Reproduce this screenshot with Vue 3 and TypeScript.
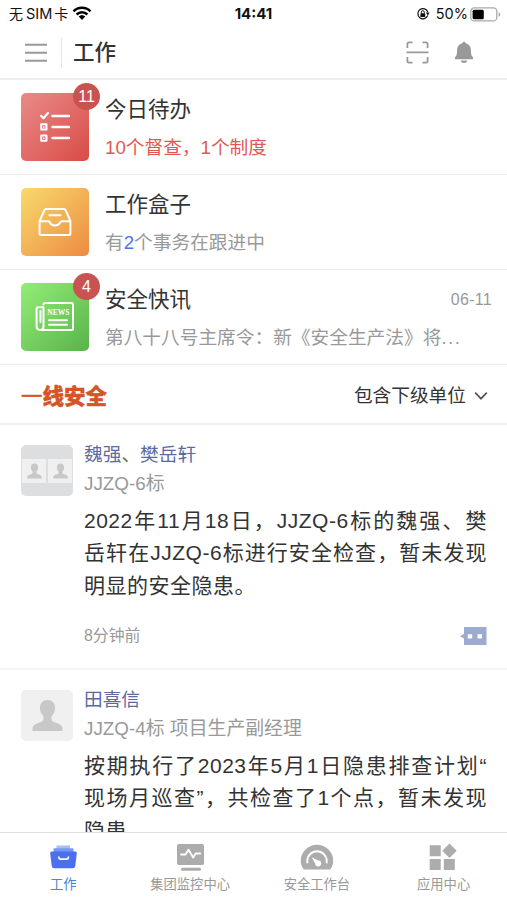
<script setup lang="ts">
interface Part { text: string; tone?: string }
interface Entry { kind: 'todo' | 'box' | 'news'; title: string; badge?: string; date?: string; parts: Part[] }
interface Line { text: string; fill: boolean }
interface Post { name: string[]; unit: string; group: boolean; time?: string; lines: Line[] }
interface Tab { label: string; icon: string }

const entries: Entry[] = [
  { kind: 'todo', title: '今日待办', badge: '11', parts: [{ text: '10个督查，1个制度', tone: 'red' }] },
  { kind: 'box', title: '工作盒子', parts: [{ text: '有' }, { text: '2', tone: 'blue' }, { text: '个事务在跟进中' }] },
  { kind: 'news', title: '安全快讯', badge: '4', date: '06-11', parts: [{ text: '第八十八号主席令：新《安全生产法》将' }, { text: '...', tone: 'dots' }] },
]

const posts: Post[] = [
  {
    name: ['魏强', '樊岳轩'], unit: 'JJZQ-6标', group: true, time: '8分钟前',
    lines: [
      { text: '2022年11月18日，JJZQ-6标的魏强、樊', fill: true },
      { text: '岳轩在JJZQ-6标进行安全检查，暂未发现', fill: true },
      { text: '明显的安全隐患。', fill: false },
    ],
  },
  {
    name: ['田喜信'], unit: 'JJZQ-4标 项目生产副经理', group: false,
    lines: [
      { text: '按期执行了2023年5月1日隐患排查计划“', fill: true },
      { text: '现场月巡查”，共检查了1个点，暂未发现', fill: true },
      { text: '隐患', fill: false },
    ],
  },
]

const tabs: Tab[] = [
  { label: '工作', icon: 'work' },
  { label: '集团监控中心', icon: 'monitor' },
  { label: '安全工作台', icon: 'gauge' },
  { label: '应用中心', icon: 'apps' },
]
</script>

<template>
  <div class="screen">
    <div class="status">
      <div class="carrier">
        <span>无</span><span class="sim">SIM</span><span>卡</span>
        <svg class="wifi" width="20" height="15" viewBox="0 0 20 15">
          <path d="M1.500 5.400a12 12 0 0 1 17 0M4.600 8.500a7.600 7.600 0 0 1 10.800 0" fill="none" stroke="#000" stroke-width="2.500" />
          <path d="M6.700 10.600a4.800 4.800 0 0 1 6.600 0L10 14z" fill="#000" />
        </svg>
      </div>
      <div class="clock">14:41</div>
      <div class="power">
        <svg width="14" height="14" viewBox="0 0 14 14">
          <path d="M11.700 8.600A5.100 5.100 0 1 1 11.800 5" fill="none" stroke="#111" stroke-width="1.200" />
          <path d="M9.800 5.600h3.800l-1.700 2.800z" fill="#111" />
          <rect x="4.400" y="6.300" width="4.800" height="3.700" rx=".6" fill="#111" />
          <path d="M5.300 6.500V5.200a1.500 1.500 0 0 1 3 0v1.300" fill="none" stroke="#111" />
        </svg>
        <span class="percent">50%</span>
        <svg width="31" height="15" viewBox="0 0 31 15">
          <rect x=".8" y=".9" width="26" height="13" rx="3.500" fill="#fff" stroke="#aaa" stroke-width="1.300" />
          <rect x="2.600" y="2.800" width="11.200" height="9.400" rx="1.500" fill="#000" />
          <path d="M28.600 5v5q1.600-.7 1.600-2.500T28.600 5z" fill="#aaa" />
        </svg>
      </div>
    </div>

    <header class="header">
      <svg class="menu" width="22" height="20" viewBox="0 0 22 20">
        <path d="M0 1.700h22M0 9.700h22M0 17.700h22" stroke="#999" stroke-width="1.900" />
      </svg>
      <span class="divider"></span>
      <h1>工作</h1>
      <svg class="scan" width="23" height="23" viewBox="0 0 23 23">
        <path d="M1.400 7V3q0-1.600 1.600-1.600h3.500M16.500 1.400H20q1.600 0 1.600 1.600v4M1.400 16v4q0 1.600 1.600 1.600h3.500M16.500 21.600H20q1.600 0 1.600-1.600v-4M.5 11.400h22" fill="none" stroke="#999" stroke-width="1.800" />
      </svg>
      <svg class="bell" width="20" height="23" viewBox="0 0 20 23">
        <path d="M10 .8c1 0 1.500.7 1.500 1.500 3.500.7 5.400 3.500 5.400 6.800 0 4.300.5 5.900 2.200 7.300v1.800H.9v-1.800c1.700-1.400 2.200-3 2.200-7.300 0-3.300 1.900-6.100 5.400-6.800C8.500 1.500 9 .8 10 .8zM7 19.500h6a3 2.500 0 0 1-6 0z" fill="#999" />
      </svg>
    </header>

    <main class="content">
      <section v-for="entry in entries" :key="entry.kind" class="entry">
        <div class="tile" :class="entry.kind">
          <svg v-if="entry.kind === 'todo'" width="68" height="68" viewBox="0 0 68 68" fill="none" stroke="#fff">
            <path d="m20 22.800 2.500 2.500 4.500-5.300" stroke-width="2.200" stroke-linecap="round" stroke-linejoin="round" />
            <path d="M31.500 23h16.500M31.500 34h16.500M31.500 45h16.500" stroke-width="2.400" stroke-linecap="round" />
            <path d="M20.200 31.300h5.300v5.300h-5.300zM20.200 42.400h5.300v5.300h-5.300z" stroke-width="2" stroke-linejoin="round" />
            <path d="M22 34h1.700M22 45.100h1.700" stroke-width="1.300" />
          </svg>
          <svg v-else-if="entry.kind === 'box'" width="68" height="68" viewBox="0 0 68 68" fill="none" stroke="#fff" stroke-width="2" stroke-linejoin="round" stroke-linecap="round">
            <path d="M18.600 33.200 23.200 22.500q.6-1.400 2-1.400h17.600q1.400 0 2 1.400l4.600 10.700V45.500q0 1.500-1.500 1.500H20.100q-1.500 0-1.500-1.500zM18.600 33.200h8.600q1.300 0 1.800 1.400 1 2.800 5 2.800t5-2.800q.5-1.400 1.800-1.400h8.600M28.500 27.300h11" />
          </svg>
          <svg v-else width="68" height="68" viewBox="0 0 68 68" fill="none" stroke="#fff" stroke-width="2" stroke-linejoin="round" stroke-linecap="round">
            <path d="M22.500 21.400q0-1.400 1.500-1.400h26.500q1.500 0 1.500 1.400v24q0 1.500-1.500 1.500H19q-3.400 0-3.400-3.400V25.500q0-1.300 1.300-1.300h5.600v19.300q0 3.400-3.200 3.400M28 37.300h18M28 41.800h18M19.500 28v11" />
            <text x="37.400" y="31.500" text-anchor="middle" class="news-word">NEWS</text>
          </svg>
          <span v-if="entry.badge" class="badge">{{ entry.badge }}</span>
        </div>
        <div class="entry-text">
          <div class="entry-head">
            <h2>{{ entry.title }}</h2>
            <time v-if="entry.date">{{ entry.date }}</time>
          </div>
          <p><span v-for="part in entry.parts" :key="part.text" :class="part.tone">{{ part.text }}</span></p>
        </div>
      </section>

      <div class="filter">
        <strong><span class="first">一</span>线安全</strong>
        <span class="scope">包含下级单位</span>
        <svg width="14" height="10" viewBox="0 0 14 10"><path d="m1.200 1.700 5.800 6 5.800-6" fill="none" stroke="#555" stroke-width="1.700" /></svg>
      </div>

      <article v-for="post in posts" :key="post.unit" class="post">
        <div class="avatar" :class="{ group: post.group }">
          <div v-for="n in post.name" :key="n" class="person">
            <svg viewBox="0 0 32 34">
              <path d="M16 1c5 0 7.800 3.500 7.800 8.300 0 3.500-1.500 6.500-3.600 8.200v3c0 2.300 2.200 3 5.300 4.200 3.700 1.400 6 3 6 6V33H.5v-2.300c0-3 2.300-4.600 6-6 3.100-1.200 5.300-1.900 5.300-4.200v-3C9.700 15.800 8.200 12.800 8.200 9.300 8.200 4.500 11 1 16 1z" fill="#c8c8c8" />
            </svg>
          </div>
        </div>
        <div class="body">
          <div class="name"><template v-for="(n, i) in post.name" :key="n"><i v-if="i">、</i>{{ n }}</template></div>
          <div class="unit">{{ post.unit }}</div>
          <div class="message">
            <div v-for="line in post.lines" :key="line.text" :class="{ fill: line.fill }">{{ line.text }}</div>
          </div>
          <div v-if="post.time" class="foot">
            <span>{{ post.time }}</span>
            <svg width="27" height="18" viewBox="0 0 27 18">
              <path fill-rule="evenodd" d="M4 0h22.500v18H4v-6.500L0 9.300 4 7zM7.700 7.200v4.300h4.500V7.200zM17.500 7.200v4.300H22V7.200z" fill="#9daacf" />
            </svg>
          </div>
        </div>
      </article>
    </main>

    <nav class="tabs">
      <div v-for="tab in tabs" :key="tab.icon" class="tab" :class="tab.icon">
        <svg v-if="tab.icon === 'work'" width="34" height="30" viewBox="0 0 34 30">
          <path d="M10.500 2.500h13.500v4H10.500z" fill="#a9bdf8" />
          <path d="M7.500 5.300h20v6h-20z" fill="#7797f5" />
          <path d="M5.700 8.500h23.600q1.700 0 1.500 1.700l-1.500 12.500q-.3 2.500-2.500 2.500H8.200q-2.200 0-2.500-2.500L4.200 10.200Q4 8.500 5.700 8.500z" fill="#4b70ed" />
          <path d="M12.700 13.500q0 2.700 2.200 2.700h5.400q2.200 0 2.200-2.700" fill="none" stroke="#fff" stroke-width="1.700" />
        </svg>
        <svg v-else-if="tab.icon === 'monitor'" width="34" height="30" viewBox="0 0 34 30">
          <rect x="4" y="1" width="27" height="21" rx="1.800" fill="#acacac" />
          <path d="M8 11.500h4.500l3-4.700 4.700 7.700 2.500-4h4.500" fill="none" stroke="#fff" stroke-width="1.900" stroke-linejoin="round" stroke-linecap="round" />
          <path d="M9.500 26.200h17" stroke="#acacac" stroke-width="3" stroke-linecap="round" />
        </svg>
        <svg v-else-if="tab.icon === 'gauge'" width="34" height="30" viewBox="0 0 34 30">
          <path d="M3.800 26.500C1.200 23 .8 20.400.8 18a16.200 16.200 0 0 1 32.400 0c0 2.400-.4 5-3 8.500z" fill="#acacac" />
          <path d="M7.300 20.200V18a9.700 9.700 0 0 1 19.400 0v2.200" fill="none" stroke="#fff" stroke-width="2" />
          <path d="M11.700 14.300 18 17.500a3 3 0 1 1-2.800 3z" fill="#fff" />
        </svg>
        <svg v-else width="34" height="30" viewBox="0 0 34 30">
          <path d="M2.700 2.200h11v11h-11zM2.700 16h11v11h-11zM16.800 16h11v11h-11zM22.500.5l7.200 7.200-7.200 7.200-7.200-7.200z" fill="#acacac" />
        </svg>
        <span>{{ tab.label }}</span>
      </div>
    </nav>
  </div>
</template>

<style>
body { margin: 0; background: #fff; }
</style>

<style scoped>
.screen {
  width: 507px; height: 900px; overflow: hidden; display: flex; flex-direction: column;
  background: #fff; color: #333; font-family: "Liberation Sans", "Noto Sans CJK SC", sans-serif;
}
h1, h2, p { margin: 0; font-weight: 400; }
svg { display: block; flex: none; }
.status { height: 28px; display: grid; grid-template-columns: 1fr auto 1fr; align-items: center; padding: 0 6px 0 9px; color: #111; font-size: 14px; }
.carrier { display: flex; align-items: center; line-height: 20px; }
.sim { font: 14.500px/20px Inter, sans-serif; margin: 0 2px 0 3px; }
.wifi { margin: -2px 0 0 4px; }
.clock { font: 700 15px/20px Inter, sans-serif; margin-right: 3px; color: #111; }
.power { display: flex; justify-content: flex-end; align-items: center; }
.percent { font: 14.500px/20px Inter, sans-serif; margin: 0 2px 0 6px; }
.header { height: 52px; flex: none; display: flex; align-items: center; padding: 0 33px 0 25px; border-bottom: 2px solid #eee; box-sizing: border-box; }
.divider { width: 1px; height: 30px; background: #e4e4e4; margin: 0 11px 0 14px; }
h1 { flex: 1; font-size: 21.500px; font-weight: 500; line-height: 30px; }
.scan { margin: 0 25px 2px 0; }
.bell { margin-bottom: 2px; }
.content { flex: 1; min-height: 0; overflow: hidden; }
.entry { height: 95px; box-sizing: border-box; border-bottom: 1px solid #ececec; padding: 13px 15px 0 21px; display: flex; gap: 16px; }
.tile { position: relative; width: 68px; height: 68px; flex: none; border-radius: 5px; }
.todo { background: linear-gradient(135deg, #e98b88, #d94b47); }
.box { background: linear-gradient(135deg, #f7da6b, #ee8b42); }
.news { background: linear-gradient(135deg, #92ee76, #59b34a); }
.news-word { font: 700 7.500px "Liberation Serif", serif; fill: #fff; stroke: none; }
.badge { position: absolute; right: -11px; top: -10px; width: 27px; height: 27px; border-radius: 50%; background: #c95350; color: #fff; font-size: 16px; line-height: 27px; text-align: center; }
.entry-text { flex: 1; min-width: 0; }
.entry-head { display: flex; justify-content: space-between; align-items: center; height: 34px; }
h2 { font-size: 21.500px; line-height: 34px; }
time { font-size: 16px; color: #999; letter-spacing: .3px; }
p { font-size: 18.700px; line-height: 28px; margin-top: 7px; color: #999; white-space: nowrap; }
.red { color: #df5854; }
.blue { color: #4c72ee; }
.dots { letter-spacing: 1.500px; }
.filter { height: 60px; box-sizing: border-box; border-bottom: 2px solid #eee; display: flex; align-items: center; padding: 0 19px 0 21px; }
.filter strong { flex: 1; font-size: 21.500px; font-weight: 900; color: #d45525; -webkit-text-stroke: .4px #d45525; }
.filter .first { font-weight: 400; }
.scope { font-size: 18.700px; margin: -2px 8px 0 0; }
.filter svg { margin-top: 3px; }
.post { display: flex; gap: 11px; padding: 20px 20px 0 21px; height: 245px; box-sizing: border-box; border-bottom: 2px solid #f5f5f5; }
.avatar { width: 52px; height: 51px; flex: none; border-radius: 5px; background: #f0f0f0; display: flex; align-items: center; justify-content: center; overflow: hidden; }
.person svg { width: 31px; height: 33px; }
.avatar.group { background: #dcdedf; gap: 2px; }
.group .person { width: 24px; height: 24px; background: #f0f0f0; display: flex; align-items: center; justify-content: center; }
.group .person svg { width: 15px; height: 16px; }
.body { flex: 1; min-width: 0; }
.name { font-size: 18.700px; line-height: 28px; margin-top: -4px; color: #5a6b9f; }
.name i { font-style: normal; color: #666; }
.unit { font-size: 18.850px; line-height: 28px; color: #999; margin-top: 1px; }
.message { margin-top: 7px; font-size: 21px; line-height: 32.300px; letter-spacing: .5px; white-space: nowrap; }
.message .fill { text-align: justify; text-align-last: justify; }
.foot { display: flex; align-items: center; justify-content: space-between; margin-top: 22px; font-size: 15.900px; line-height: 24px; color: #999; }
.tabs { height: 68px; flex: none; box-sizing: border-box; border-top: 1px solid #ddd; display: grid; grid-template-columns: repeat(4, 1fr); background: #fff; }
.tab { display: flex; flex-direction: column; align-items: center; gap: 2px; padding-top: 10px; font-size: 13.300px; line-height: 20px; color: #999; }
.tab.work { color: #4a86d8; }
</style>
